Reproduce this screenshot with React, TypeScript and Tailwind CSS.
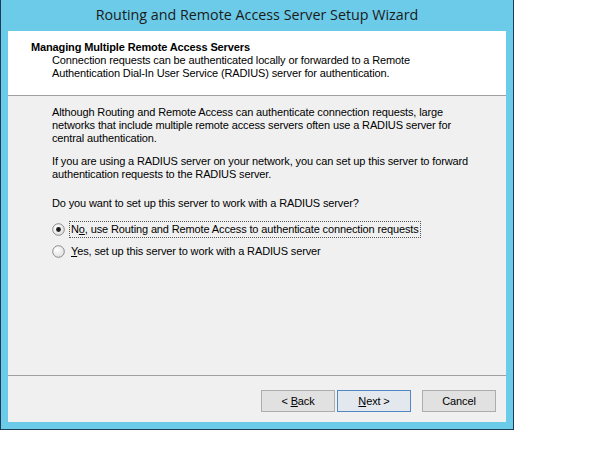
import React from "react";

const dlgFont = { fontFamily: '"Liberation Sans", Arial, sans-serif', letterSpacing: "-0.13px" };

function Radio({ checked }: { checked: boolean }) {
  return (
    <svg width="13" height="13" viewBox="0 0 13 13" className="shrink-0">
      <defs>
        <radialGradient id={checked ? "rg1" : "rg2"} cx="0.35" cy="0.35" r="0.8">
          <stop offset="0" stopColor="#ffffff" />
          <stop offset="1" stopColor="#dcdcdc" />
        </radialGradient>
      </defs>
      <circle cx="6.5" cy="6.5" r="5.8" fill={`url(#${checked ? "rg1" : "rg2"})`} stroke="#8a8a8a" strokeWidth="1" />
      {checked && <circle cx="6.5" cy="6.5" r="2.4" fill="#1a1a1a" />}
    </svg>
  );
}

function Btn({ children, focused }: { children: React.ReactNode; focused?: boolean }) {
  return (
    <button
      className={`h-[22px] w-[74px] text-[11px] text-black ${
        focused ? "border border-[#4f88c2] bg-[#e3e8ee]" : "border border-[#adadad] bg-[#e1e1e1]"
      }`}
      style={dlgFont}
    >
      {children}
    </button>
  );
}

export default function App() {
  return (
    <div className="h-[460px] w-full bg-white">
      <div className="flex h-[430px] w-[514px] flex-col border-x border-b border-[#1d3c58] bg-[#6ccbe8]">
        {/* title bar */}
        <div
          className="flex h-[31px] items-center justify-center pb-[2px] text-[14.3px] text-[#1b1b1b]"
          style={{ fontFamily: '"Open Sans", "Noto Sans", sans-serif' }}
        >
          Routing and Remote Access Server Setup Wizard
        </div>

        <div className="mx-[7px] flex h-[391px] flex-col bg-[#f0f0f0] text-[11px] leading-[13px] text-black" style={dlgFont}>
          <div className="h-[65px] border-b border-[#a0a0a0] bg-white pl-[23px] pt-[10px]">
            <div className="font-bold">Managing Multiple Remote Access Servers</div>
            <div className="pl-[21px]">
              Connection requests can be authenticated locally or forwarded to a Remote
              <br />
              Authentication Dial-In User Service (RADIUS) server for authentication.
            </div>
          </div>

          <div className="h-[280px] border-b border-[#a0a0a0] pl-[44px] pt-[10px]">
            <p>
              Although Routing and Remote Access can authenticate connection requests, large
              <br />
              networks that include multiple remote access servers often use a RADIUS server for
              <br />
              central authentication.
            </p>
            <p className="mt-[10px]">
              If you are using a RADIUS server on your network, you can set up this server to forward
              <br />
              authentication requests to the RADIUS server.
            </p>
            <p className="mt-[16px]">Do you want to set up this server to work with a RADIUS server?</p>

            <div className="mt-[11px] flex items-center gap-[4px]">
              <Radio checked />
              <span className="border border-dotted border-[#555] px-[1px] py-[1px]">
                N<span className="underline">o</span>, use Routing and Remote Access to authenticate connection requests
              </span>
            </div>
            <div className="mt-[7px] flex items-center gap-[4px]">
              <Radio checked={false} />
              <span className="px-[2px]">
                <span className="underline">Y</span>es, set up this server to work with a RADIUS server
              </span>
            </div>
          </div>

          <div className="flex justify-end pr-[10px] pt-[14px]">
            <Btn>
              &lt; <span className="underline">B</span>ack
            </Btn>
            <div className="ml-[2px]">
              <Btn focused>
                <span className="underline">N</span>ext &gt;
              </Btn>
            </div>
            <div className="ml-[11px]">
              <Btn>Cancel</Btn>
            </div>
          </div>
        </div>
      </div>
    </div>
  );
}
